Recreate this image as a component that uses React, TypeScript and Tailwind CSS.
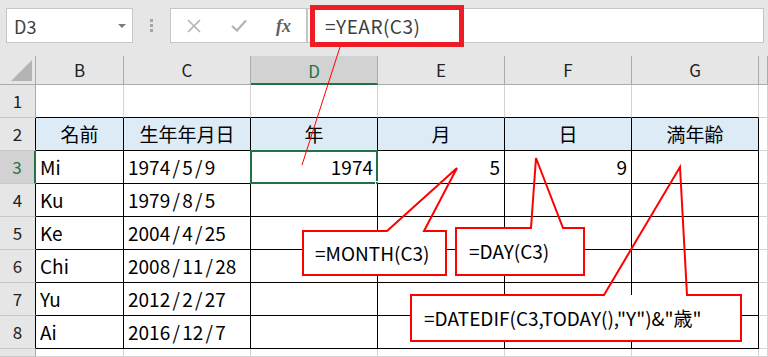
import React from "react";

const FONT = "font-['Noto_Sans_CJK_JP','Noto_Sans',sans-serif]";

const colWidths = [36, 88, 127, 127, 127, 127, 127, 9];
const rowHeights = [29, 33, 33, 33, 33, 33, 33, 33, 33, 8];
const colLetters = ["", "B", "C", "D", "E", "F", "G", ""];

type Cell = { text: string; align?: "left" | "right" | "center" };

const tableRows: Cell[][] = [
  [
    { text: "名前", align: "center" },
    { text: "生年年月日", align: "center" },
    { text: "年", align: "center" },
    { text: "月", align: "center" },
    { text: "日", align: "center" },
    { text: "満年齢", align: "center" },
  ],
  [
    { text: "Mi" },
    { text: "1974/5/9" },
    { text: "1974", align: "right" },
    { text: "5", align: "right" },
    { text: "9", align: "right" },
    { text: "" },
  ],
  [{ text: "Ku" }, { text: "1979/8/5" }],
  [{ text: "Ke" }, { text: "2004/4/25" }],
  [{ text: "Chi" }, { text: "2008/11/28" }],
  [{ text: "Yu" }, { text: "2012/2/27" }],
  [{ text: "Ai" }, { text: "2016/12/7" }],
];

// dates in the sheet font have a wide slash
function CellText({ text }: { text: string }) {
  if (!text.includes("/")) return <>{text}</>;
  const parts = text.split("/");
  return (
    <>
      {parts.map((p, i) => (
        <React.Fragment key={i}>
          {i > 0 && <span className="inline-block w-[12px] text-center">/</span>}
          {p}
        </React.Fragment>
      ))}
    </>
  );
}

function TopBar() {
  return (
    <div className="flex h-[56px] items-start bg-[#e6e6e6] pl-[6px] pt-[8px]">
      <div className="flex h-[35px] w-[127px] items-center justify-between border border-[#c6c6c6] bg-white pl-[7px] pr-[6px]">
        <span className="text-[18px] leading-none text-[#404040]">D3</span>
        <span className="h-0 w-0 border-x-[4px] border-t-[4px] border-x-transparent border-t-[#7a7a7a]" />
      </div>
      <div className="flex h-[35px] w-[37px] flex-col items-center justify-center gap-[2px]">
        <span className="h-[3px] w-[3px] bg-[#a6a6a6]" />
        <span className="h-[3px] w-[3px] bg-[#a6a6a6]" />
        <span className="h-[3px] w-[3px] bg-[#a6a6a6]" />
      </div>
      <div className="flex h-[35px] w-[137px] items-center border border-[#c6c6c6] bg-white">
        <div className="flex w-[45px] justify-center">
          <svg width="14" height="14" viewBox="0 0 14 14">
            <path d="M1 1 L13 13 M13 1 L1 13" stroke="#b3b3b3" strokeWidth="1.6" fill="none" />
          </svg>
        </div>
        <div className="flex w-[45px] justify-center">
          <svg width="16" height="13" viewBox="0 0 16 13">
            <path d="M1 7 L6 11.5 L15 1.5" stroke="#b3b3b3" strokeWidth="2.2" fill="none" />
          </svg>
        </div>
        <div className="flex w-[45px] justify-center">
          <span className="font-['Liberation_Serif',serif] text-[18px] font-bold italic leading-none text-[#606060]">
            fx
          </span>
        </div>
      </div>
      <div className="flex h-[35px] w-[457px] items-center border border-[#c6c6c6] bg-white pl-[17px]">
        <span className="text-[19px] leading-none tracking-[0.5px] text-[#404040]">=YEAR(C3)</span>
      </div>
    </div>
  );
}

function Grid() {
  const rows = [];
  for (let r = 0; r < rowHeights.length; r++) {
    const cells = [];
    for (let c = 0; c < colWidths.length; c++) {
      const w = colWidths[c];
      const key = `${r}-${c}`;
      if (r === 0) {
        if (c === 0) {
          cells.push(
            <div
              key={key}
              className="relative shrink-0 border-r border-b border-r-[#ababab] border-b-[#ababab] bg-[#e6e6e6]"
              style={{ width: w }}
            >
              <span className="absolute bottom-[3px] right-[3px] h-0 w-0 border-b-[21px] border-l-[21px] border-b-[#b4b4b4] border-l-transparent" />
            </div>,
          );
        } else {
          const selected = c === 3;
          cells.push(
            <div
              key={key}
              className={
                selected
                  ? "flex shrink-0 items-center justify-center border-r border-b-2 border-r-[#ababab] border-b-[#217346] bg-[#d2d2d2] pt-[2px] text-[17px] text-[#217346]"
                  : "flex shrink-0 items-center justify-center border-r border-b border-r-[#ababab] border-b-[#ababab] bg-[#e6e6e6] text-[17px] text-[#222]"
              }
              style={{ width: w }}
            >
              {colLetters[c]}
            </div>,
          );
        }
        continue;
      }

      const inTable = r >= 2 && r <= 8;
      if (c === 0) {
        let cls =
          "flex shrink-0 items-center justify-center border-r border-b border-b-[#c8c8c8] bg-[#e6e6e6] text-[17px] text-[#222]";
        if (r === 3) {
          cls =
            "flex shrink-0 items-center justify-center border-r-2 border-b border-r-[#217346] border-b-[#c8c8c8] bg-[#d2d2d2] text-[17px] text-[#217346]";
        } else if (inTable) {
          cls += " border-r-black";
        } else {
          cls += " border-r-[#ababab]";
        }
        cells.push(
          <div key={key} className={cls} style={{ width: w }}>
            {r <= 8 ? String(r) : ""}
          </div>,
        );
        continue;
      }

      const tableCol = c >= 1 && c <= 6;
      const black = inTable && tableCol;
      const rightCls = black ? "border-r-black" : "border-r-[#d4d4d4]";
      const bottomCls = black || (r === 1 && tableCol) ? "border-b-black" : "border-b-[#d4d4d4]";
      const cell = black ? tableRows[r - 2][c - 1] : undefined;
      const align = cell?.align ?? "left";
      const alignCls =
        align === "center" ? "justify-center" : align === "right" ? "justify-end pr-[4px]" : "justify-start pl-[4px]";
      const bg = r === 2 && tableCol ? "bg-[#ddebf7]" : "bg-white";
      const isSel = r === 3 && c === 3;

      cells.push(
        <div
          key={key}
          className={`relative flex shrink-0 items-center whitespace-nowrap border-r border-b text-[19px] text-black ${rightCls} ${bottomCls} ${alignCls} ${bg}`}
          style={{ width: w }}
        >
          {cell && <CellText text={cell.text} />}
          {isSel && (
            <>
              <span className="absolute inset-[-1px] border-2 border-[#217346]" />
              <span className="absolute bottom-[-4px] right-[-4px] h-[6px] w-[6px] border border-white bg-[#217346]" />
            </>
          )}
        </div>,
      );
    }
    rows.push(
      <div key={r} className="flex" style={{ height: rowHeights[r] }}>
        {cells}
      </div>,
    );
  }
  return <div className="flex flex-col">{rows}</div>;
}

function Callouts() {
  return (
    <>
      <div className="absolute left-[310px] top-[5px] h-[42px] w-[154px] border-[5px] border-[#ee1c25]" />

      <div className="absolute left-[303px] top-[231px] flex h-[44px] w-[143px] items-center bg-white pl-[12px] text-[19px] text-black">
        =MONTH(C3)
      </div>
      <div className="absolute left-[456px] top-[228px] flex h-[47px] w-[128px] items-center bg-white pl-[13px] text-[19px] text-black">
        =DAY(C3)
      </div>
      <div className="absolute left-[411px] top-[295px] flex h-[46px] w-[330px] items-center whitespace-nowrap bg-white pl-[13px] text-[19px] text-black">
        =DATEDIF(C3,TODAY(),"Y")&amp;"歳"
      </div>

      <svg className="pointer-events-none absolute left-0 top-0" width="768" height="357" viewBox="0 0 768 357">
        <path d="M340 47 L302 165" stroke="#ff0000" strokeWidth="1" fill="none" />
        <path
          d="M303 231 L387 231 L457 168 L424 231 L446 231 L446 275 L303 275 Z"
          stroke="#ff0000"
          strokeWidth="2"
          fill="none"
        />
        <path
          d="M456 228 L531 228 L536 158 L563 228 L584 228 L584 275 L456 275 Z"
          stroke="#ff0000"
          strokeWidth="2"
          fill="none"
        />
        <path
          d="M411 295 L604 295 L680 167 L687 295 L741 295 L741 341 L411 341 Z"
          stroke="#ff0000"
          strokeWidth="2"
          fill="none"
        />
      </svg>
    </>
  );
}

export default function App() {
  return (
    <div className={`relative h-[357px] w-[768px] overflow-hidden bg-white ${FONT}`}>
      <TopBar />
      <Grid />
      <Callouts />
    </div>
  );
}
